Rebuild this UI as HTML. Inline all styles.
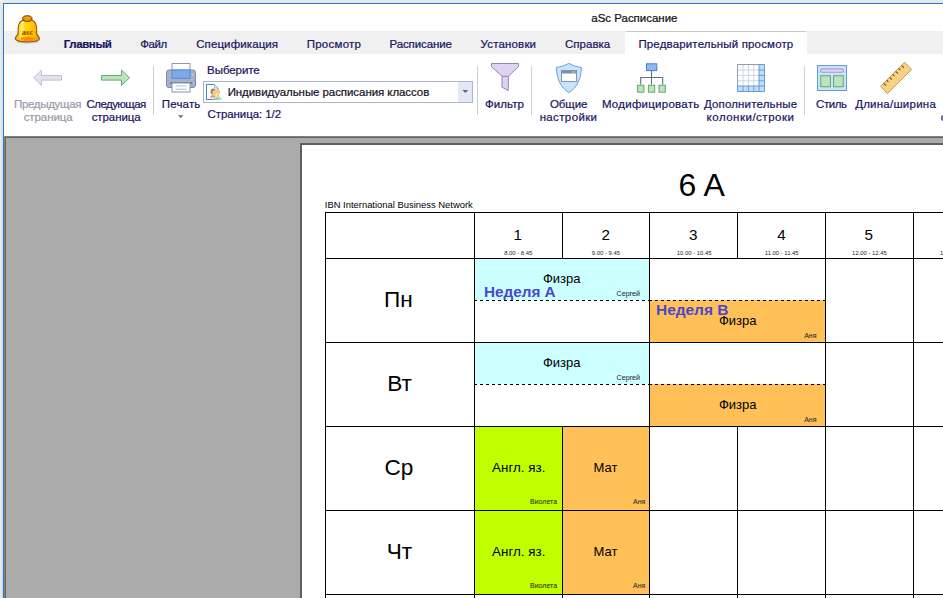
<!DOCTYPE html>
<html lang="ru"><head><meta charset="utf-8"><title>aSc Расписание</title>
<style>
html,body{margin:0;padding:0}
body{width:943px;height:598px;overflow:hidden;position:relative;background:#e6e6e6;font-family:'Liberation Sans',sans-serif}
.a{position:absolute}
.t{position:absolute;white-space:nowrap;line-height:14px;font-size:11.5px}
.u{-webkit-text-stroke:0.22px currentColor}
.ln{position:absolute;background:#000}
.sep{position:absolute;width:1px;top:66px;height:49px;background:#cfcfcf}
.pg{position:absolute;white-space:nowrap;color:#000;text-align:center}
</style></head><body>

<div class="a" style="left:0;top:0;width:943px;height:2px;background:linear-gradient(90deg,#f2f2f2 0,#e8e8e8 8px,#e6e6e6 100%)"></div>
<div class="a" style="left:2px;top:2px;width:941px;height:1px;background:#ebe7e3"></div>
<div class="a" style="left:0;top:2px;width:2px;height:596px;background:linear-gradient(90deg,#ececec,#e2e2e2)"></div>
<div class="a" style="left:2px;top:2px;width:1px;height:596px;background:linear-gradient(#e9e5e1,#dcdcdc 30%,#d6d6d6)"></div>
<div class="a" id="win" style="left:3px;top:3px;width:940px;height:595px;background:#fff;border-left:1px solid #1a7fd4;border-top:1px solid #1a7fd4;box-sizing:border-box"></div>
<div class="a" style="left:4px;top:31px;width:939px;height:23px;background:#f0f0f0"></div>
<div class="a" style="left:625px;top:31px;width:182px;height:23px;background:#fff"></div><div class="a" style="left:626px;top:31px;width:180px;height:1px;background:#c6c6c6"></div>
<div class="a" style="left:4px;top:136px;width:939px;height:462px;background:#ababab;border-left:1px solid #828282;border-top:1px solid #828282;box-sizing:border-box"></div>
<div class="a" style="left:5px;top:137px;width:938px;height:461px;border-left:1px solid #646464;border-top:1px solid #646464;box-sizing:border-box"></div>
<div class="a" style="left:300px;top:143px;width:643px;height:455px;background:#fff;border-left:2px solid #5f5f5f;border-top:2px solid #5f5f5f;box-sizing:border-box"></div>
<!-- ribbon separators -->
<div class="sep" style="left:153px"></div><div class="sep" style="left:477px"></div><div class="sep" style="left:531px"></div><div class="sep" style="left:804px"></div>
<!-- combo box -->
<div class="a" style="left:203px;top:81px;width:270px;height:22px;background:#fff;border:1px solid #abb7c9;box-sizing:border-box"></div>
<div class="a" style="left:458px;top:82px;width:14px;height:20px;background:#e3e8f3"></div>
<svg class="a" style="left:0;top:0" width="943" height="136" viewBox="0 0 943 136">
<defs>
<linearGradient id="bg1" x1="0" y1="0" x2="1" y2="0"><stop offset="0" stop-color="#f2a200"/><stop offset="0.22" stop-color="#ffe040"/><stop offset="0.5" stop-color="#ffd400"/><stop offset="0.8" stop-color="#fdbc00"/><stop offset="1" stop-color="#e88c00"/></linearGradient>
<linearGradient id="bg2" x1="0" y1="0" x2="0" y2="1"><stop offset="0" stop-color="#ffc010"/><stop offset="1" stop-color="#ff8c00"/></linearGradient>
<radialGradient id="bg3" cx="0.5" cy="0.4" r="0.6"><stop offset="0" stop-color="#ffb800"/><stop offset="1" stop-color="#c87800"/></radialGradient>
</defs>
<!-- bell -->
<ellipse cx="27.4" cy="42.2" rx="11" ry="1.6" fill="#b0b0b0" opacity="0.55"/>
<path d="M18.1,33.6 C17.6,26.5 18.6,21.6 22.6,20.2 C25,19.4 29.8,19.4 32.2,20.2 C36.2,21.6 37.2,26.5 36.7,33.6 C36.9,35.4 39.5,36.6 39.5,38.6 C39.5,41 33.6,41.9 27.4,41.9 C21.2,41.9 15.2,41 15.2,38.6 C15.2,36.6 17.9,35.4 18.1,33.6 Z" fill="url(#bg1)" stroke="#9a5210" stroke-width="1.1"/>
<ellipse cx="28" cy="38.7" rx="7.6" ry="2.5" fill="#ff9a00"/>
<ellipse cx="28.6" cy="39.2" rx="5" ry="1.6" fill="#ff8a00"/>
<path d="M21,24 C21,22.4 22.4,21.4 23.8,21.2 L23.8,33.6 L21,33.6 Z" fill="#fff7a0" opacity="0.55"/>
<ellipse cx="27.3" cy="18.6" rx="4.7" ry="2.9" fill="url(#bg3)" stroke="#7c3f0a" stroke-width="1"/>
<text x="27.5" y="35" font-family="'Liberation Serif',serif" font-size="8.2" font-weight="700" fill="#7d4210" opacity="0.9" text-anchor="middle" textLength="11.4" lengthAdjust="spacingAndGlyphs">asc</text>
<!-- arrows -->
<path d="M33.5,77.8 L41.5,70.2 V75.5 H61.5 V80.1 H41.5 V85.4 Z" fill="#e4e2ee" stroke="#c2bed6" stroke-width="1" stroke-linejoin="miter"/>
<path d="M129.5,77.8 L121.5,70.2 V75.5 H101.5 V80.1 H121.5 V85.4 Z" fill="#bfe3bf" stroke="#5fa773" stroke-width="1" stroke-linejoin="miter"/>
<!-- printer -->
<rect x="172" y="63.5" width="18" height="8" fill="#fff" stroke="#8c98ae"/>
<rect x="166.5" y="70" width="29" height="17.5" rx="2.5" fill="#a3b1ca" stroke="#7c8cab"/>
<rect x="172" y="70" width="18" height="8.3" fill="#7eaaea" stroke="#5c88d2"/>
<rect x="192" y="74" width="1.3" height="1.3" fill="#ffe27a"/>
<rect x="170" y="82" width="22" height="2" fill="#6f7f9e"/>
<rect x="172" y="83" width="18" height="9" fill="#fff" stroke="#8c98ae"/>
<path d="M175.5,86 H186.5 M175.5,89.2 H186.5" stroke="#b4bccb" stroke-width="1"/>
<path d="M178.2,115.2 H183.3 L180.75,118.2 Z" fill="#5d6d93"/>
<!-- combo icon -->
<path d="M206.5,84.5 H214.5 L218,88 V99.5 H206.5 Z" fill="#fff" stroke="#3d84da" stroke-width="1"/>
<path d="M214.5,84.5 V88 H218" fill="#d6e8fb" stroke="#8db8ea" stroke-width="0.8"/>
<path d="M209.8,97.4 C210.4,95.6 212,95 214,95 L216,97.4 Z" fill="#f2848c"/>
<ellipse cx="213.2" cy="91.6" rx="2.6" ry="3.2" fill="#b8764a"/>
<rect x="212.6" y="90.6" width="3" height="4.6" fill="#f5d48a"/>
<ellipse cx="217" cy="92.6" rx="3" ry="3.6" fill="#f3cf82"/>
<rect x="216" y="93" width="2" height="4.6" fill="#f9e2a8"/>
<path d="M213,99.8 C213.4,97.6 215.2,97 217.4,97 C219.6,97 221.6,97.6 222,99.8 Z" fill="#a8dba8"/>
<path d="M462.4,89.9 H468.2 L465.3,93 Z" fill="#54659a"/>
<!-- funnel -->
<path d="M491.5,63.5 H518.5 V66.6 L508.3,76.3 V90.6 L502,87.2 V76.3 L491.5,66.6 Z" fill="#dcd5f1" stroke="#9a80ba" stroke-width="1"/>
<path d="M502,76.3 H508.3" stroke="#9a80ba" stroke-width="1"/>
<!-- shield -->
<path d="M568.9,63.3 C565,65.6 560.5,66.9 556.4,67.4 C556.6,78 560,87 568.9,92.6 C577.8,87 581.2,78 581.4,67.4 C577.3,66.9 572.8,65.6 568.9,63.3 Z" fill="#c5e5fc" stroke="#6a94d8" stroke-width="0.9"/>
<rect x="561.5" y="70.5" width="15" height="11" fill="#fff" stroke="#8596aa"/>
<rect x="561.5" y="70.5" width="15" height="3" fill="#7d8fa5"/>
<rect x="572" y="71.3" width="1.2" height="1.6" fill="#f1d36a"/><rect x="574" y="71.3" width="1.2" height="1.6" fill="#d9c26a"/>
<!-- org chart -->
<path d="M651.5,71 V84.5 M640.7,84.5 V77.5 H662.7 V84.5" fill="none" stroke="#5f6f8c" stroke-width="1.1"/>
<rect x="646.5" y="63.8" width="10.3" height="6.8" fill="#8cb9f1" stroke="#4a7dc9"/>
<rect x="637.6" y="85.2" width="6.3" height="7" fill="#bfe3bf" stroke="#5fa773"/>
<rect x="648.4" y="85.2" width="6.3" height="7" fill="#bfe3bf" stroke="#5fa773"/>
<rect x="659" y="85.2" width="6.3" height="7" fill="#bfe3bf" stroke="#5fa773"/>
<!-- grid -->
<rect x="737.5" y="64.5" width="27" height="27" fill="#fff"/>
<path d="M759,64.5 H764.5 V91.5 H737.5 V86 H759 Z" fill="#bcdffc"/>
<path d="M743,64.5 V86 M748.4,64.5 V86 M753.8,64.5 V86 M737.5,70 H759 M737.5,75.4 H759 M737.5,80.8 H759" stroke="#cbd8e4" stroke-width="1"/>
<path d="M737.5,86 V64.5 H759" fill="none" stroke="#8e9db2" stroke-width="1"/>
<path d="M759,64.5 H764.5 V91.5 H737.5 V86 H759 Z M743,86 V91.5 M748.4,86 V91.5 M753.8,86 V91.5 M759,86 V91.5 M759,86 H764.5 M759,70 H764.5 M759,75.4 H764.5 M759,80.8 H764.5" fill="none" stroke="#6e97d3" stroke-width="1"/>
<!-- style -->
<rect x="817.5" y="65.5" width="29" height="25" fill="#c5e5fc" stroke="#6e97d3"/>
<rect x="820.8" y="69" width="22.4" height="3.2" rx="0.8" fill="#e3dbf5" stroke="#a98bc3"/>
<rect x="820.8" y="75.7" width="9.6" height="11" fill="#bfe3bf" stroke="#5fa773"/>
<rect x="833.6" y="75.7" width="9.6" height="11" fill="#bfe3bf" stroke="#5fa773"/>
<!-- ruler -->
<path d="M904.6,62.2 L911.6,69.4 L887.4,93.5 L880.6,86.3 Z" fill="#f6d283" stroke="#c49b4c" stroke-width="1"/>
<path d="M883.6,83.2 l2.4,2.4 M886.6,80.2 l1.8,1.8 M889.6,77.3 l2.4,2.4 M892.6,74.3 l1.8,1.8 M895.6,71.3 l2.4,2.4 M898.6,68.4 l1.8,1.8 M901.6,65.4 l2.4,2.4" stroke="#7d4e26" stroke-width="1.1"/>
</svg>

<div class="a" style="left:475px;top:259px;width:174px;height:41px;background:#ccffff"></div>
<div class="a" style="left:650px;top:300px;width:175px;height:42px;background:#ffc057"></div>
<div class="a" style="left:475px;top:343px;width:174px;height:41px;background:#ccffff"></div>
<div class="a" style="left:650px;top:384px;width:175px;height:42px;background:#ffc057"></div>
<div class="a" style="left:475px;top:427px;width:87px;height:83px;background:#bfff00"></div>
<div class="a" style="left:563px;top:427px;width:86px;height:83px;background:#ffc057"></div>
<div class="a" style="left:475px;top:511px;width:87px;height:83px;background:#bfff00"></div>
<div class="a" style="left:563px;top:511px;width:86px;height:83px;background:#ffc057"></div>
<div class="ln" style="left:325px;top:212px;width:618px;height:1px"></div>
<div class="ln" style="left:325px;top:258px;width:618px;height:1px"></div>
<div class="ln" style="left:325px;top:342px;width:618px;height:1px"></div>
<div class="ln" style="left:325px;top:426px;width:618px;height:1px"></div>
<div class="ln" style="left:325px;top:510px;width:618px;height:1px"></div>
<div class="ln" style="left:325px;top:594px;width:618px;height:1px"></div>
<div class="ln" style="left:325px;top:212px;width:1px;height:386px"></div>
<div class="ln" style="left:474px;top:212px;width:1px;height:386px"></div>
<div class="ln" style="left:649px;top:212px;width:1px;height:386px"></div>
<div class="ln" style="left:825px;top:212px;width:1px;height:386px"></div>
<div class="ln" style="left:913px;top:212px;width:1px;height:386px"></div>
<div class="ln" style="left:562px;top:212px;width:1px;height:47px"></div>
<div class="ln" style="left:562px;top:426px;width:1px;height:172px"></div>
<div class="ln" style="left:737px;top:212px;width:1px;height:47px"></div>
<div class="ln" style="left:737px;top:426px;width:1px;height:172px"></div>
<div class="a" style="left:474px;top:300px;width:175px;height:1px;background:repeating-linear-gradient(90deg,#000 0,#000 3px,transparent 3px,transparent 6px)"></div>
<div class="a" style="left:649px;top:300px;width:176px;height:1px;background:repeating-linear-gradient(90deg,#000 0,#000 3px,transparent 3px,transparent 6px)"></div>
<div class="a" style="left:474px;top:384px;width:175px;height:1px;background:repeating-linear-gradient(90deg,#000 0,#000 3px,transparent 3px,transparent 6px)"></div>
<div class="a" style="left:649px;top:384px;width:176px;height:1px;background:repeating-linear-gradient(90deg,#000 0,#000 3px,transparent 3px,transparent 6px)"></div>
<div class="t u" id="title" style="left:591.34px;top:11.00px;color:#111;letter-spacing:-0.022px">aSc Расписание</div>
<div class="t u" id="t1" style="left:63.70px;top:37.00px;color:#19155f;font-weight:700;letter-spacing:-0.390px">Главный</div>
<div class="t u" id="t2" style="left:140.32px;top:37.00px;color:#19155f;letter-spacing:-0.463px">Файл</div>
<div class="t u" id="t3" style="left:196.19px;top:37.00px;color:#19155f;letter-spacing:0.104px">Спецификация</div>
<div class="t u" id="t4" style="left:306.65px;top:37.00px;color:#19155f;letter-spacing:0.265px">Просмотр</div>
<div class="t u" id="t5" style="left:389.45px;top:37.00px;color:#19155f;letter-spacing:-0.092px">Расписание</div>
<div class="t u" id="t6" style="left:480.56px;top:37.00px;color:#19155f;letter-spacing:0.167px">Установки</div>
<div class="t u" id="t7" style="left:564.93px;top:37.00px;color:#19155f;letter-spacing:0.034px">Справка</div>
<div class="t u" id="t8" style="left:638.38px;top:37.00px;color:#19155f;letter-spacing:0.157px">Предварительный просмотр</div>
<div class="t u" id="r1a" style="left:13.95px;top:97.00px;color:#9a9aa8;letter-spacing:-0.304px">Предыдущая</div>
<div class="t u" id="r1b" style="left:23.69px;top:110.00px;color:#9a9aa8;letter-spacing:-0.080px">страница</div>
<div class="t u" id="r2a" style="left:86.56px;top:97.00px;color:#19155f;letter-spacing:-0.570px">Следующая</div>
<div class="t u" id="r2b" style="left:91.69px;top:110.00px;color:#19155f;letter-spacing:-0.080px">страница</div>
<div class="t u" id="r3" style="left:161.72px;top:97.00px;color:#19155f;letter-spacing:0.195px">Печать</div>
<div class="t u" id="r4" style="left:207.10px;top:63.00px;color:#19155f;letter-spacing:-0.069px">Выберите</div>
<div class="t u" id="r5" style="left:227.65px;top:85.00px;color:#15131f;letter-spacing:-0.069px">Индивидуальные расписания классов</div>
<div class="t u" id="r6" style="left:207.45px;top:107.00px;color:#19155f;letter-spacing:-0.067px">Страница: 1/2</div>
<div class="t u" id="r7" style="left:484.90px;top:97.00px;color:#19155f;letter-spacing:0.072px">Фильтр</div>
<div class="t u" id="r8a" style="left:549.99px;top:97.00px;color:#19155f;letter-spacing:-0.098px">Общие</div>
<div class="t u" id="r8b" style="left:539.65px;top:110.00px;color:#19155f;letter-spacing:0.367px">настройки</div>
<div class="t u" id="r9" style="left:601.91px;top:97.00px;color:#19155f;letter-spacing:0.251px">Модифицировать</div>
<div class="t u" id="r10a" style="left:703.89px;top:97.00px;color:#19155f;letter-spacing:0.163px">Дополнительные</div>
<div class="t u" id="r10b" style="left:706.58px;top:110.00px;color:#19155f;letter-spacing:0.500px">колонки/строки</div>
<div class="t u" id="r11" style="left:816.06px;top:97.00px;color:#19155f;letter-spacing:-0.409px">Стиль</div>
<div class="t u" id="r12" style="left:855.16px;top:97.00px;color:#19155f;letter-spacing:0.231px">Длина/ширина</div>
<div class="t u" style="left:940.8px;top:110px;color:#19155f">страницы</div><div class="t u" style="left:951px;top:97px;color:#19155f">Размер</div>
<div class="t" id="hdr" style="left:324.80px;top:199.00px;font-size:9.42px;line-height:12px;color:#000">IBN International Business Network</div>
<div class="t" id="cls" style="left:678.50px;top:166.00px;font-size:32px;line-height:39px;color:#000">6 A</div>
<div class="t" id="d1" style="left:384.12px;top:286.01px;font-size:22.6px;line-height:28px;color:#000">Пн</div>
<div class="t" id="d2" style="left:387.19px;top:370.01px;font-size:22.6px;line-height:28px;color:#000">Вт</div>
<div class="t" id="d3" style="left:384.52px;top:454.01px;font-size:22.6px;line-height:28px;color:#000">Ср</div>
<div class="t" id="d4" style="left:386.68px;top:538.01px;font-size:22.6px;line-height:28px;color:#000">Чт</div>
<div class="t" id="n0" style="left:513.52px;top:225.00px;font-size:15.2px;line-height:19px;color:#000">1</div>
<div class="t" id="tm0" style="left:504.14px;top:249.01px;font-size:5.9px;line-height:8px;color:#222">8.00 - 8.45</div>
<div class="t" id="n1" style="left:601.53px;top:225.00px;font-size:15.2px;line-height:19px;color:#000">2</div>
<div class="t" id="tm1" style="left:591.86px;top:249.01px;font-size:5.9px;line-height:8px;color:#222">9.00 - 9.45</div>
<div class="t" id="n2" style="left:688.88px;top:225.00px;font-size:15.2px;line-height:19px;color:#000">3</div>
<div class="t" id="tm2" style="left:676.75px;top:249.01px;font-size:5.9px;line-height:8px;color:#222">10.00 - 10.45</div>
<div class="t" id="n3" style="left:777.15px;top:225.00px;font-size:15.2px;line-height:19px;color:#000">4</div>
<div class="t" id="tm3" style="left:764.80px;top:249.01px;font-size:5.9px;line-height:8px;color:#222">11.00 - 11.45</div>
<div class="t" id="n4" style="left:864.49px;top:225.00px;font-size:15.2px;line-height:19px;color:#000">5</div>
<div class="t" id="tm4" style="left:852.12px;top:249.01px;font-size:5.9px;line-height:8px;color:#222">12.00 - 12.45</div>
<div class="t" id="n5" style="left:952.75px;top:225.00px;font-size:15.2px;line-height:19px;color:#000">6</div>
<div class="t" id="tm5" style="left:940.12px;top:249.01px;font-size:5.9px;line-height:8px;color:#222">13.00 - 13.45</div>
<div class="t" id="f1" style="left:542.88px;top:271.00px;font-size:13px;line-height:16px;color:#000">Физра</div>
<div class="t" id="wa" style="left:483.91px;top:282.01px;font-size:15.3px;line-height:19px;color:#4a47cc;font-weight:700">Неделя A</div>
<div class="t" id="s1" style="left:616.48px;top:289.00px;font-size:7.2px;line-height:9px;color:#222">Сергей</div>
<div class="t" id="wb" style="left:656.00px;top:300.00px;font-size:15.45px;line-height:19px;color:#4a47cc;font-weight:700">Неделя B</div>
<div class="t" id="f2" style="left:718.88px;top:313.00px;font-size:13px;line-height:16px;color:#000">Физра</div>
<div class="t" id="a1" style="left:804.19px;top:331.00px;font-size:7px;line-height:9px;color:#222">Аня</div>
<div class="t" id="f3" style="left:542.88px;top:355.00px;font-size:13px;line-height:16px;color:#000">Физра</div>
<div class="t" id="s2" style="left:616.48px;top:373.00px;font-size:7.2px;line-height:9px;color:#222">Сергей</div>
<div class="t" id="f4" style="left:718.88px;top:397.00px;font-size:13px;line-height:16px;color:#000">Физра</div>
<div class="t" id="a2" style="left:804.19px;top:415.00px;font-size:7px;line-height:9px;color:#222">Аня</div>
<div class="t" id="e1" style="left:492.10px;top:459.01px;font-size:13.4px;line-height:17px;color:#000">Англ. яз.</div>
<div class="t" id="m1" style="left:593.49px;top:460.00px;font-size:13px;line-height:16px;color:#000">Мат</div>
<div class="t" id="v1" style="left:530.00px;top:497.00px;font-size:7px;line-height:9px;color:#222">Виолета</div>
<div class="t" id="a3" style="left:633.09px;top:497.00px;font-size:7px;line-height:9px;color:#222">Аня</div>
<div class="t" id="e2" style="left:492.10px;top:543.01px;font-size:13.4px;line-height:17px;color:#000">Англ. яз.</div>
<div class="t" id="m2" style="left:593.49px;top:544.00px;font-size:13px;line-height:16px;color:#000">Мат</div>
<div class="t" id="v2" style="left:530.00px;top:581.00px;font-size:7px;line-height:9px;color:#222">Виолета</div>
<div class="t" id="a4" style="left:633.09px;top:581.00px;font-size:7px;line-height:9px;color:#222">Аня</div>
</body></html>
